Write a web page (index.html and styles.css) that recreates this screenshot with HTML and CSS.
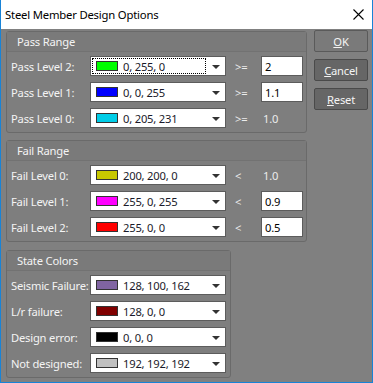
FILE: index.html
```html
<!DOCTYPE html>
<html>
<head>
<meta charset="UTF-8" />
<title>Steel Member Design Options</title>
<link rel="stylesheet" href="styles.css">
</head>
<body>
<div class="window">
	<div class="titlebar">
		<span class="title">Steel Member Design Options</span>
		<svg class="close" width="11" height="11" viewBox="0 0 11 11"><path d="M0.5 0.5 L10.5 10.5 M10.5 0.5 L0.5 10.5" stroke="#000" stroke-width="1.1" fill="none"/></svg>
	</div>
	<div class="content">
		<div class="groups">
			<fieldset class="group">
				<div class="legend">Pass Range</div>
				<div class="rows">
					<div class="row">
						<label>Pass Level 2:</label>
						<div class="combo"><span class="value focus"><i class="swatch" style="background:rgb(0,255,0)"></i>0, 255, 0</span><b class="arrow"></b></div>
						<span class="op">&gt;=</span>
						<input class="num" value="2">
					</div>
					<div class="row">
						<label>Pass Level 1:</label>
						<div class="combo"><span class="value"><i class="swatch" style="background:rgb(0,0,255)"></i>0, 0, 255</span><b class="arrow"></b></div>
						<span class="op">&gt;=</span>
						<input class="num" value="1.1">
					</div>
					<div class="row">
						<label>Pass Level 0:</label>
						<div class="combo"><span class="value"><i class="swatch" style="background:rgb(0,205,231)"></i>0, 205, 231</span><b class="arrow"></b></div>
						<span class="op">&gt;=</span>
						<span class="fixed">1.0</span>
					</div>
				</div>
			</fieldset>
			<fieldset class="group">
				<div class="legend">Fail Range</div>
				<div class="rows">
					<div class="row">
						<label>Fail Level 0:</label>
						<div class="combo"><span class="value"><i class="swatch" style="background:rgb(200,200,0)"></i>200, 200, 0</span><b class="arrow"></b></div>
						<span class="op">&lt;</span>
						<span class="fixed">1.0</span>
					</div>
					<div class="row">
						<label>Fail Level 1:</label>
						<div class="combo"><span class="value"><i class="swatch" style="background:rgb(255,0,255)"></i>255, 0, 255</span><b class="arrow"></b></div>
						<span class="op">&lt;</span>
						<input class="num" value="0.9">
					</div>
					<div class="row">
						<label>Fail Level 2:</label>
						<div class="combo"><span class="value"><i class="swatch" style="background:rgb(255,0,0)"></i>255, 0, 0</span><b class="arrow"></b></div>
						<span class="op">&lt;</span>
						<input class="num" value="0.5">
					</div>
				</div>
			</fieldset>
			<fieldset class="group state">
				<div class="legend">State Colors</div>
				<div class="rows">
					<div class="row">
						<label>Seismic Failure:</label>
						<div class="combo"><span class="value"><i class="swatch" style="background:rgb(128,100,162)"></i>128, 100, 162</span><b class="arrow"></b></div>
					</div>
					<div class="row">
						<label>L/r failure:</label>
						<div class="combo"><span class="value"><i class="swatch" style="background:rgb(128,0,0)"></i>128, 0, 0</span><b class="arrow"></b></div>
					</div>
					<div class="row">
						<label>Design error:</label>
						<div class="combo"><span class="value"><i class="swatch" style="background:rgb(0,0,0)"></i>0, 0, 0</span><b class="arrow"></b></div>
					</div>
					<div class="row">
						<label>Not designed:</label>
						<div class="combo"><span class="value"><i class="swatch" style="background:rgb(192,192,192)"></i>192, 192, 192</span><b class="arrow"></b></div>
					</div>
				</div>
			</fieldset>
		</div>
		<div class="buttons">
			<button class="default"><u>O</u>K</button>
			<button><u>C</u>ancel</button>
			<button><u>R</u>eset</button>
		</div>
	</div>
</div>
</body>
</html>
```

FILE: styles.css
```css
html, body{
	margin: 0;
	padding: 0;
}
body{
	width: 373px;
	height: 383px;
	overflow: hidden;
	font-family: "Noto Sans", "Open Sans", sans-serif;
	font-size: 11.2px;
	letter-spacing: -0.2px;
}
.window{
	width: 373px;
	height: 383px;
	box-sizing: border-box;
	border: 1px solid #1883d7;
	border-top: none;
	background: #808080;
	display: flex;
	flex-direction: column;
}
.titlebar{
	height: 29px;
	flex: none;
	background: #fff;
	display: flex;
	align-items: center;
	justify-content: space-between;
	padding: 0 8px 0 4px;
	color: #000;
}
.title{
	font-size: 11.3px;
}
.close{
	display: block;
	margin-top: 0;
}
.content{
	display: flex;
	gap: 7px;
	padding: 0 4px 0 5px;
}
.groups{
	display: flex;
	flex-direction: column;
	gap: 7px;
	padding-top: 2px;
	width: 301px;
}
.group{
	margin: 0;
	padding: 0;
	border: 1px solid #6a6a6a;
	border-radius: 3px;
	background: #7e7e7e;
	min-width: 0;
}
.group.state{
	width: 225px;
	box-sizing: border-box;
	margin-top: 1px;
}
.legend{
	height: 19px;
	line-height: 19px;
	padding-left: 10px;
	background: #7a7a7a;
	border-bottom: 1px solid #727272;
	color: #f4f4f4;
}
.rows{
	display: flex;
	flex-direction: column;
	gap: 6px;
	padding: 4px 3px 4px 4px;
}
.row{
	display: flex;
	align-items: center;
	height: 20px;
}
.row label{
	width: 79px;
	flex: none;
	white-space: nowrap;
	color: #f4f4f4;
}
.combo{
	width: 136px;
	height: 20px;
	box-sizing: border-box;
	flex: none;
	display: flex;
	align-items: center;
	background: #fff;
	border: 1px solid #5c5c5c;
	color: #1a1a2a;
}
.value{
	flex: 1;
	display: flex;
	align-items: center;
	height: 14px;
	margin: 0 0 0 1px;
	padding-left: 3px;
	border: 1px dotted transparent;
	white-space: nowrap;
}
.value.focus{
	border-color: #000;
}
.swatch{
	display: inline-block;
	width: 20px;
	height: 8px;
	border: 1px solid #333;
	margin-right: 5px;
}
.arrow{
	width: 0;
	height: 0;
	border-left: 4px solid transparent;
	border-right: 4px solid transparent;
	border-top: 4px solid #333;
	margin: 1px 5px 0 6px;
}
.op{
	width: 26px;
	margin-left: 9px;
	flex: none;
	color: #ececec;
}
.num{
	width: 42px;
	height: 20px;
	box-sizing: border-box;
	margin: 0;
	padding: 0 3px;
	border: 1px solid #5c5c5c;
	background: #fff;
	font: inherit;
	letter-spacing: inherit;
	color: #000;
	outline: none;
}
.fixed{
	padding-left: 2px;
	color: #ececec;
}
.buttons{
	display: flex;
	flex-direction: column;
	gap: 7px;
	padding-top: 1px;
}
.buttons button{
	width: 54px;
	height: 22px;
	margin: 0;
	padding: 0;
	border: 1px solid #4a4a4a;
	border-radius: 2px;
	background: #666;
	color: #f4f4f4;
	font: inherit;
	letter-spacing: inherit;
}
.buttons button.default{
	background: #7a7a7a;
	border-color: #5a5a5a;
}
```
